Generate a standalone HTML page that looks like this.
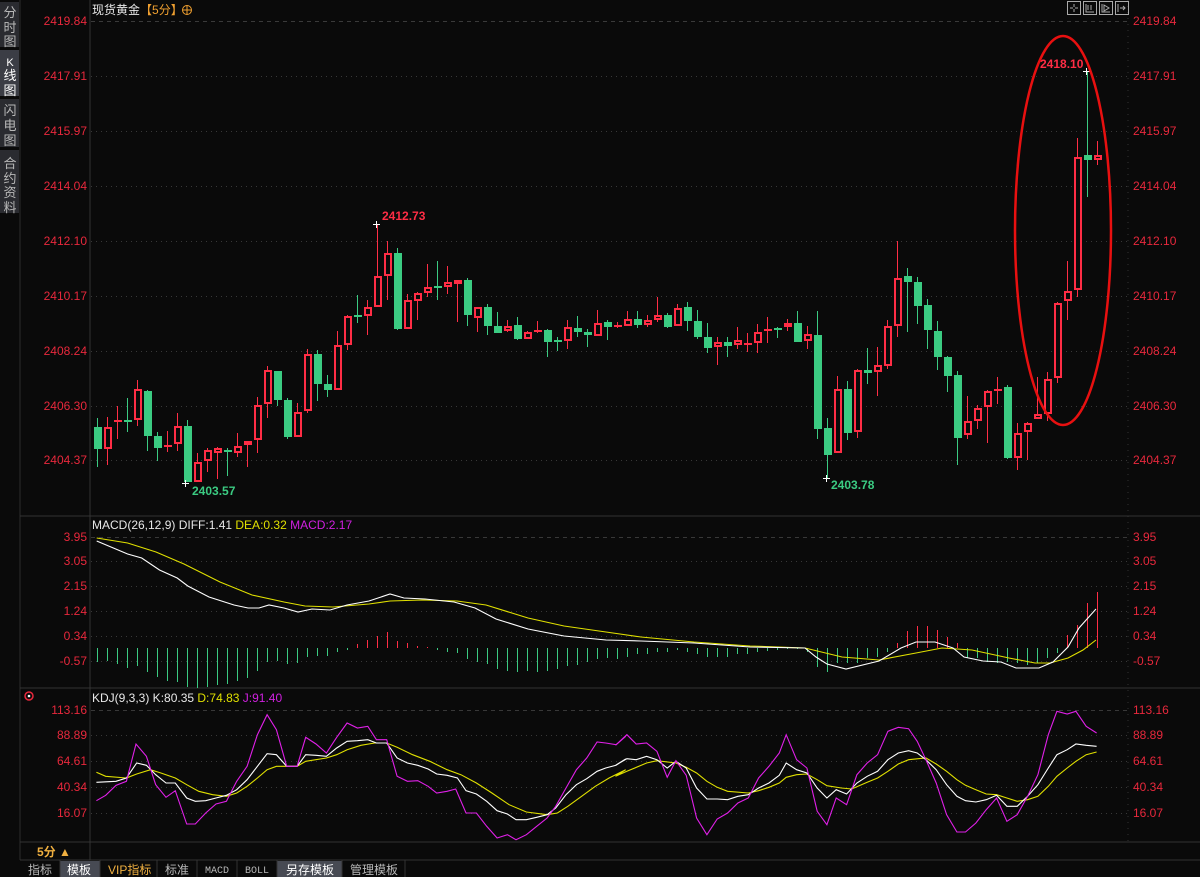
<!DOCTYPE html>
<html><head><meta charset="utf-8">
<style>
html,body{margin:0;padding:0;background:#0a0a0a;width:1200px;height:877px;overflow:hidden;font-family:"Liberation Sans","Noto Sans CJK SC",sans-serif}
svg{position:absolute;left:0;top:0}
#candles,#macd rect,#grid{shape-rendering:crispEdges}
</style></head><body>
<svg id="s" width="1200" height="877" xmlns="http://www.w3.org/2000/svg" font-family="Liberation Sans, Noto Sans CJK SC, sans-serif">
<rect width="1200" height="877" fill="#0a0a0a"/>
<rect x="0" y="2" width="19" height="45" fill="#2a2b30"/>
<rect x="0" y="50" width="19" height="46" fill="#3b3d45"/>
<rect x="0" y="99" width="19" height="48" fill="#2a2b30"/>
<rect x="0" y="150" width="19" height="63" fill="#2a2b30"/>
<g fill="#b8b8b8" font-size="13" text-anchor="middle">
<text x="10" y="17">分</text><text x="10" y="32">时</text><text x="10" y="46">图</text>
<text x="10" y="66" fill="#fff" font-size="11">K</text><text x="10" y="80" fill="#fff">线</text><text x="10" y="95" fill="#fff">图</text>
<text x="10" y="115">闪</text><text x="10" y="130">电</text><text x="10" y="145">图</text>
<text x="10" y="168">合</text><text x="10" y="183">约</text><text x="10" y="197">资</text><text x="10" y="212">料</text>
</g>
<line x1="20" y1="0" x2="20" y2="860" stroke="#2c2c2c"/>
<line x1="90" y1="0" x2="90" y2="842" stroke="#333"/>
<line x1="1128" y1="0" x2="1128" y2="842" stroke="#333" stroke-dasharray="1,5"/>
<line x1="20" y1="516" x2="1200" y2="516" stroke="#333"/>
<line x1="20" y1="688" x2="1200" y2="688" stroke="#333"/>
<line x1="20" y1="842" x2="1200" y2="842" stroke="#333"/>
<line x1="20" y1="860" x2="1200" y2="860" stroke="#333"/>
<line x1="90" y1="842" x2="90" y2="860" stroke="#333"/>
<g id="grid"></g>
<g id="labels" font-size="12" fill="#e8283c"></g>
<text x="92" y="14" font-size="12" fill="#e8e8e8">现货黄金<tspan fill="#f0a030">【5分】</tspan></text>
<circle cx="187" cy="10" r="4.5" fill="none" stroke="#f0a030"/><line x1="182.5" y1="10" x2="191.5" y2="10" stroke="#f0a030"/><line x1="187" y1="5.5" x2="187" y2="14.5" stroke="#f0a030"/>
<g fill="none" stroke="#aaa" stroke-width="1">
<rect x="1067.5" y="1.5" width="13" height="13"/><rect x="1083.5" y="1.5" width="13" height="13"/><rect x="1099.5" y="1.5" width="13" height="13"/><rect x="1115.5" y="1.5" width="13" height="13"/>
<path d="M1070 8h3M1075 8h3M1074 4v3M1074 9v3M1086 4v8h8M1088 5v5M1091 5v5M1102 4v8h8M1104 5l5 3-5 3zM1118 4v8M1120 8h5M1123 6l2 2-2 2"/>
</g>
<g id="candles"></g>
<g font-size="12" font-weight="bold">
<text x="382" y="220" fill="#ff2d45">2412.73</text>
<text x="192" y="495" fill="#3bcb82">2403.57</text>
<text x="831" y="489" fill="#3bcb82">2403.78</text>
<text x="1040" y="68" fill="#ff2d45">2418.10</text>
</g>
<g stroke="#fff" stroke-width="1">
<path d="M373 224.5h7M376.5 221v7M182 483.5h7M185.5 480v7M823 478.5h7M826.5 475v7M1083 71.5h7M1086.5 68v7"/>
</g>
<ellipse cx="1063" cy="230.5" rx="48" ry="194.5" fill="none" stroke="#e81010" stroke-width="2.5"/>
<text x="92" y="529" font-size="12" fill="#e8e8e8">MACD(26,12,9) DIFF:1.41 <tspan fill="#e0e000">DEA:0.32</tspan> <tspan fill="#d020e0">MACD:2.17</tspan></text>
<g id="macd"></g>
<circle cx="29" cy="696" r="4" fill="none" stroke="#e8283c" stroke-width="1.5"/><circle cx="29" cy="696" r="1.3" fill="#fff"/>
<text x="92" y="702" font-size="12" fill="#e8e8e8">KDJ(9,3,3) K:80.35 <tspan fill="#e0e000">D:74.83</tspan> <tspan fill="#d020e0">J:91.40</tspan></text>
<g id="kdj"></g>
<text x="37" y="856" font-size="12" font-weight="bold" fill="#f0b040">5分 ▲</text>
<rect x="60" y="861" width="40" height="16" fill="#474a53"/>
<rect x="277" y="861" width="65" height="16" fill="#474a53"/>
<g stroke="#333"><path d="M60 860v17M100 860v17M157 860v17M197 860v17M237 860v17M277 860v17M342 860v17M405 860v17"/></g>
<g font-size="12" fill="#b8b8b8">
<text x="28" y="874">指标</text>
<text x="67" y="874" fill="#fff">模板</text>
<text x="108" y="874" fill="#f0b040">VIP指标</text>
<text x="165" y="874">标准</text>
<text x="205" y="873" font-size="10" font-family="Liberation Mono, monospace">MACD</text>
<text x="245" y="873" font-size="10" font-family="Liberation Mono, monospace">BOLL</text>
<text x="286" y="874" fill="#fff">另存模板</text>
<text x="350" y="874">管理模板</text>
</g>
</svg>
<script>
var NS="http://www.w3.org/2000/svg";
function el(p,t,a){var e=document.createElementNS(NS,t);for(var k in a)e.setAttribute(k,a[k]);document.getElementById(p).appendChild(e);return e;}
function lab(y,txt,x){var t=el("labels","text",{x:x,y:y+4,"text-anchor":x<100?"end":"start"});t.textContent=txt;}
var py=[21,76,131,186,241,296,351,406,460],pl=["2419.84","2417.91","2415.97","2414.04","2412.10","2410.17","2408.24","2406.30","2404.37"];
py.forEach(function(y,i){el("grid","line",{x1:91,y1:y+.5,x2:1128,y2:y+.5,stroke:i==0?"#3a3a3a":"#383838","stroke-dasharray":i==0?"4,4":"1,4"});lab(y,pl[i],87);lab(y,pl[i],1133);});
var my=[537,561,586,611,636,661],ml=["3.95","3.05","2.15","1.24","0.34","-0.57"];
my.forEach(function(y,i){el("grid","line",{x1:91,y1:y+.5,x2:1128,y2:y+.5,stroke:"#383838","stroke-dasharray":i==0?"4,4":"1,4"});lab(y,ml[i],87);lab(y,ml[i],1133);});
var ky=[710,735,761,787,813],kl=["113.16","88.89","64.61","40.34","16.07"];
ky.forEach(function(y,i){el("grid","line",{x1:91,y1:y+.5,x2:1128,y2:y+.5,stroke:"#383838","stroke-dasharray":i==0?"4,4":"1,4"});lab(y,kl[i],87);lab(y,kl[i],1133);});
var C=[["g",427,449,418,467],["r",427,449,417,465],["r",421,421,406,439],["g",421,421,398,432],["r",389,420,380,426],["g",391,436,390,451],["g",436,448,432,461],["r",445,447,431,452],["r",426,444,413,451],["g",426,482,420,482],
["r",462,482,453,482],["r",450,461,448,472],["r",448,453,447,479],["g",450,452,448,476],["r",446,453,433,457],["r",441,445,441,467],["r",405,440,397,453],["r",370,404,366,418],["g",371,400,371,406],["g",400,437,398,439],
["r",412,437,403,437],["r",354,411,349,413],["g",354,384,350,401],["g",384,390,375,397],["r",345,390,331,390],["r",316,345,315,350],["g",316,316,295,323],["r",307,316,300,335],["r",276,307,224,307],["r",253,276,241,300],
["g",253,329,248,330],["r",300,329,294,329],["r",293,301,292,320],["r",287,293,264,297],["g",287,287,261,300],["r",282,287,266,294],["r",280,284,280,322],["g",280,315,278,326],["r",307,318,307,332],["g",307,326,304,335],
["g",326,333,312,333],["r",326,331,320,332],["g",325,339,317,340],["r",332,339,331,339],["r",331,331,321,333],["g",330,342,329,357],["g",341,341,337,351],["r",327,341,320,349],["g",328,332,316,337],["g",332,335,329,347],
["r",323,336,310,336],["g",322,327,320,340],["r",326,326,322,328],["r",319,326,311,326],["g",319,325,311,328],["r",320,325,315,327],["r",315,320,297,322],["g",315,327,313,328],["r",308,326,304,326],["g",307,321,302,331],
["g",321,337,310,339],["g",337,348,323,353],["r",342,347,337,365],["g",342,346,337,357],["r",340,345,327,349],["r",344,344,333,352],["r",332,343,324,353],["r",330,330,317,343],["g",329,329,327,338],["r",323,327,319,331],
["g",323,342,311,342],["r",334,341,326,349],["g",335,429,311,439],["g",428,455,418,478],["r",389,453,376,453],["g",389,433,381,440],["r",370,432,369,438],["g",370,373,348,384],["r",365,372,347,396],["r",326,366,320,369],
["r",278,326,241,337],["g",276,282,268,332],["g",282,306,277,324],["g",305,330,299,349],["g",331,357,321,370],["g",357,376,356,392],["g",375,438,371,465],["r",421,435,396,439],["r",408,421,405,429],["r",391,407,390,443],
["r",390,390,377,404],["g",387,458,385,459],["r",433,458,423,470],["r",423,432,422,460],["r",414,419,377,419],["r",379,414,372,421],["r",303,378,302,383],["r",291,301,261,320],["r",157,290,138,297],["g",155,160,71,197],
["r",155,160,141,165]];
C.forEach(function(c,k){var x=Math.round(96.7+10*k);var col=c[0]=="r"?"#ff2d45":"#3bcb82";
el("candles","rect",{x:x,y:c[3],width:1,height:c[4]-c[3],fill:col});
var h=c[2]-c[1];
if(h<2){el("candles","rect",{x:x-3,y:c[1]-1,width:8,height:2,fill:col});}
else if(c[0]=="r"){el("candles","rect",{x:x-3,y:c[1],width:8,height:h,fill:col});el("candles","rect",{x:x-1,y:c[1]+2,width:4,height:Math.max(0,h-4),fill:"#0a0a0a"});}
else el("candles","rect",{x:x-3,y:c[1],width:8,height:h,fill:col});});
var mb=[440,437,447,458,453,472,485,497,500,517,518,517,510,507,497,490,469,442,437,447,445,425,422,422,410,404,387,375,362,350,378,385,393,397,405,410,413,433,440,447,462,468,470,467,470,468,462,453,450,440,432,430,432,425,
418,418,410,410,405,410,418,425,425,425,418,418,410,408,405,402,402,410,455,470,445,445,443,430,425,410,385,348,333,333,345,367,385,430,430,440,443,440,445,450,445,430,415,360,330,265,232];
var z=648;
mb.forEach(function(v,k){var y=Math.round(515+v/3);var x=Math.round(96.7+10*k);var red=y<z;
el("macd","rect",{x:x,y:Math.min(y,z),width:1,height:Math.max(1,Math.abs(y-z)),fill:red?"#ff2d45":"#3bcb82"});});
function poly(p,pts,col){el(p,"polyline",{points:pts,fill:"none",stroke:col,"stroke-width":1.1});}
poly("macd","96.7,538 127.6,543 156,552 184,564 220,582 252,595 284,602 305,606 333,607 369,604 390,601 422,600 457,601 486,605 528,618 564,626 606,632 641,637 694,642 750,646 805,648 842,657 879,660 916,653 942,648 972,650 1009,658 1035,663 1050,663 1068,658 1083,650 1096,640","#e0e000");
poly("macd","96.7,541 127.6,554 141.7,558 159.5,570 177.2,578 187.8,586 209,597 234,605 248,608 259,608 269,605 284,608 298,612 312,609 330,610 347,605 369,601 390,594 404,598 425,599 454,602 475,608 496,619 528,629 564,636 606,640 641,641 694,643 750,647 805,648 816,657 827,664 846,669 879,661 901,648 916,642 935,642 953,648 964,657 983,661 1001,662 1016,668 1039,668 1053,662 1068,647 1079,628 1096,609","#fff");
var J1=[33,338,60,322,90,292,120,280,148,168,178,205,205,290,235,328,262,308,295,408,320,408,350,375,380,348,410,340,440,280,470,235,500,140,528,80,555,125,585,235,615,235,640,148,670,168,700,195,730,148,760,105,790,120,820,115,845,155,875,155,905,265,935,280,965,278,995,295,1020,315,1050,310,1075,303,1105,375,1135,375,1165,415,1195,450,1225,440,1250,455,1280,440,1310,415,1340,390,1365,355,1395,300,1425,245,1455,210,1485,162,1510,165,1540,170,1568,145];
var J2=[45,172,78,140,105,168,135,165,165,190,195,268,220,218,250,262,280,390,310,440,340,393,370,375,400,345,430,330,460,270,490,235,520,195,540,140,570,215,600,240,630,370,658,410,685,330,715,350,745,260,775,225,805,200,835,130,865,118,895,122,920,160,945,215,975,285,1005,380,1035,432,1060,432,1090,405,1120,365,1150,330,1180,400,1210,380,1240,325,1270,260,1300,140,1325,70,1355,78,1380,70,1410,115,1440,135];
var K1=[33,283,90,280,120,270,150,225,178,232,205,260,235,285,262,285,295,330,320,340,350,338,380,330,410,322,440,305,470,275,500,235,528,197,555,200,585,235,615,235,640,200,670,202,700,205,730,180,760,160,790,158,820,155,845,165,875,165,905,210,935,225,965,232,995,243,1020,258,1050,262,1080,270,1105,308,1135,318,1165,340,1195,368,1225,378,1250,395,1280,395,1310,388,1340,380,1365,360,1395,320,1425,290,1455,272,1485,250,1510,240,1540,232,1568,213];
var K2=[45,232,78,212,105,215,135,205,165,215,195,240,220,220,250,240,280,300,310,333,340,333,370,335,400,325,430,320,460,300,490,285,520,262,540,225,570,245,600,255,630,300,658,330,685,305,715,318,745,285,775,265,805,250,835,215,865,195,895,188,920,195,945,215,975,245,1005,290,1035,325,1060,338,1090,342,1120,335,1150,322,1180,355,1210,355,1240,325,1270,290,1300,240,1325,200,1355,185,1380,168,1410,172,1440,175];
var D1=[33,253,60,265,120,270,150,258,190,245,220,255,262,270,295,290,330,310,370,320,410,325,440,315,470,295,500,270,528,245,555,235,615,235,640,220,700,210,730,200,760,185,800,172,840,165,875,165,905,178,950,200,1000,220,1050,245,1090,260,1135,285,1180,315,1230,350,1280,372,1340,380,1370,375,1400,355,1440,325,1480,295,1520,270,1568,245];
var D2=[45,265,78,250,135,225,165,218,220,225,250,238,280,255,310,280,340,298,370,310,430,315,460,308,490,298,520,285,540,268,570,260,600,258,630,275,658,293,700,300,730,303,775,283,805,270,835,250,865,228,895,215,945,210,975,228,1005,250,1035,275,1060,292,1090,305,1120,318,1150,320,1180,330,1210,340,1240,335,1270,325,1300,295,1325,265,1355,240,1380,220,1410,200,1440,192];
function cat(a,b){var s=[];for(var i=0;i<a.length;i+=2)s.push((85+a[i]/2.9).toFixed(1)+","+(688+a[i+1]/3).toFixed(1));for(var i=0;i<b.length;i+=2)s.push((600+b[i]/2.9).toFixed(1)+","+(688+b[i+1]/3).toFixed(1));return s.join(" ");}
poly("kdj",cat(D1,D2),"#e0e000");
poly("kdj",cat(K1,K2),"#fff");
poly("kdj",cat(J1,J2),"#e020e8");
</script>
</body></html>
